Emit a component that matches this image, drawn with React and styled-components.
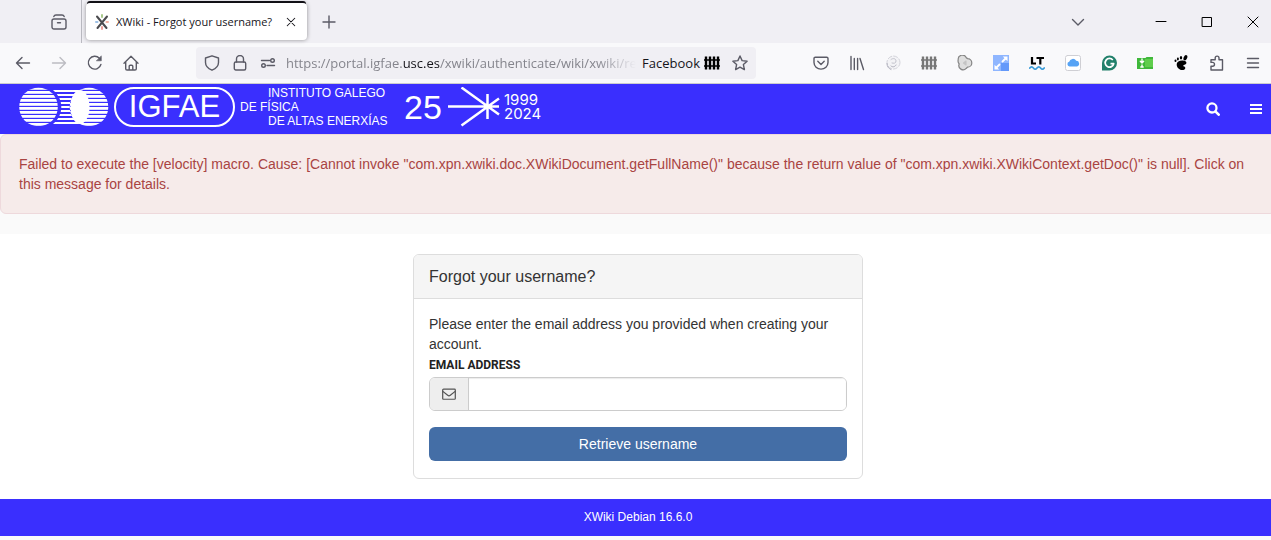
import React from 'react';
import styled, { createGlobalStyle } from 'styled-components';

// CONSTANTS
const COLORS = {
    brand: '#3a2ffe',
    tabBar: '#f0eff4',
    toolbar: '#f9f9fb',
    icon: '#5b5b66',
    pageBK: '#fafafa',
    border: '#dddddd',
    inputBorder: '#cccccc',
    text: '#333333',
    error: '#a94442',
    errorBK: '#f6ebea',
    errorBorder: '#eed9dc',
    button: '#446ea6',
};

const FONTS = {
    chrome: '"Open Sans", "Noto Sans", sans-serif',
    page: '"Liberation Sans", Arial, sans-serif',
    label: 'Roboto, "Liberation Sans", sans-serif',
};

const Icon = ({ children, size = 16, color = COLORS.icon, width = 1.4 }) => (
    <svg width={size} height={size} viewBox="0 0 16 16" fill="none" stroke={color}
        strokeWidth={width} strokeLinecap="round" strokeLinejoin="round" aria-hidden="true">
        {children}
    </svg>
)

const NAV_BUTTONS = [
    { label: 'Back', icon: <Icon><path d="M14.5 8H1.5M7 2.5 1.5 8 7 13.5" /></Icon> },
    { label: 'Forward', icon: <Icon color="#bcbcc2"><path d="M1.5 8h13M9 2.5 14.5 8 9 13.5" /></Icon> },
    {
        label: 'Reload',
        icon: <Icon><path d="M13.9 9.5A6.4 6.4 0 1 1 12.4 3.3" /><path d="M14.3 1.2v4.6H9.7z" fill={COLORS.icon} strokeWidth=".6" /></Icon>,
    },
    {
        label: 'Home',
        icon: <Icon><path d="M1 8.2 8 1.2l7 7M2.7 7v6.7a1.3 1.3 0 0 0 1.3 1.3h8a1.3 1.3 0 0 0 1.3-1.3V7M6.2 15v-3.7A1.1 1.1 0 0 1 7.3 10.2h1.4a1.1 1.1 0 0 1 1.1 1.1V15" /></Icon>,
    },
];

const Fence = ({ color }) => (
    <Icon color={color} width={2.4}>
        <path d="M2 1.5v13M6 1.5v13M10 1.5v13M14 1.5v13" strokeLinecap="butt" />
        <path d="M0 5h16M0 11h16" strokeWidth="1.4" strokeLinecap="butt" />
    </Icon>
)

const EXTENSIONS = [
    {
        label: 'Save to Pocket',
        icon: <Icon><path d="M2.3 2.2h11.4a1.3 1.3 0 0 1 1.3 1.3v4a7 6.6 0 0 1-14 0v-4a1.3 1.3 0 0 1 1.3-1.3zM4.8 6.3 8 9.4l3.2-3.1" /></Icon>,
    },
    { label: 'Library', icon: <Icon><path d="M2 1.5v13M5.3 3.5v11M8.6 3.5v11M11 3.5l3.5 11" /></Icon> },
    {
        label: 'Citations',
        icon: (
            <Icon color="#d3d3da" width={1}>
                <circle cx="8.5" cy="7.5" r="6.5" fill="#f3f3f6" strokeDasharray="4 2" />
                <path d="M6 4.500C8 2.800 11 3.500 11 6s-2.500 2.500-4 2" stroke="#c2c2cc" />
                <path d="M2 8.500c0 3 1.500 5 4 6M6 11c1.500 1.500 4 1 5-1" stroke="#aeaebb" />
            </Icon>
        ),
    },
    { label: 'Fence', icon: <Fence color="#777777" /> },
    {
        label: 'Containers',
        icon: (
            <Icon color="#858585" width={1.2}>
                <path d="M1.200 4.800a4.200 4.200 0 0 1 8-2.200 4.600 4.600 0 0 1 1.300 1 4.200 4.200 0 0 1 0 8.600 4.600 4.600 0 0 1-1.300 1.200 4.200 4.200 0 0 1-7-4.400 4.500 4.500 0 0 1-1-4.200z" fill="#dedede" />
                <path d="M6.500 8 9 6v4z" fill="#c4c4c4" stroke="#c4c4c4" />
            </Icon>
        ),
    },
    {
        label: 'Resize',
        icon: (
            <Icon color="#ffffff" width={1.8}>
                <path d="M0 0h16v16H0z" fill="#8fb6ff" stroke="none" />
                <path d="M8 8h8v8H8z" fill="#6499fa" stroke="none" />
                <path d="M9.500 6.500 13 3M6.500 9.500 3 13" />
                <path d="M9.800 1.500h4.700v4.700zM1.500 9.800v4.700h4.700z" fill="#ffffff" stroke="none" />
            </Icon>
        ),
    },
    {
        label: 'LanguageTool',
        icon: (
            <Icon color="#000000" width={2.2}>
                <path d="M3 2v6.500h4M7.500 3h7.500M11.300 3v6.500" strokeLinecap="butt" strokeLinejoin="miter" />
                <path d="M.8 13c1.200-1.600 2.400-1.600 3.600 0s2.400 1.600 3.600 0 2.400-1.600 3.600 0 2.400 1.600 3.600 0" stroke="#3a9bd8" strokeWidth="1.7" />
            </Icon>
        ),
    },
    {
        label: 'iCloud',
        icon: (
            <Icon width={1}>
                <rect x=".5" y=".5" width="15" height="15" rx="2" fill="#ffffff" stroke="#cfcfd4" />
                <path d="M4.500 11.500a2.400 2.400 0 0 1-.3-4.700 3.800 3.800 0 0 1 7-1A2.900 2.900 0 0 1 12 11.500z" fill="#56a3f5" stroke="none" />
            </Icon>
        ),
    },
    {
        label: 'Grammarly',
        icon: (
            <Icon color="#ffffff" width={1.7}>
                <path d="M8.500.5A7.500 7.500 0 1 1 8.500 15.500H1V8A7.500 7.500 0 0 1 8.500.5z" fill="#22806b" stroke="none" />
                <path d="M11.800 5A4.300 4.300 0 1 0 12.700 8.700H9.500" strokeLinecap="butt" />
            </Icon>
        ),
    },
    {
        label: 'Downloads',
        icon: (
            <Icon color="#ffffff" width={1.4}>
                <path d="M0 3h8.500l1-1H16v12H0z" fill="#3fb83a" stroke="none" />
                <path d="M8 4h8v8H8z" fill="#5fcd4c" stroke="none" />
                <path d="M5 4v4M3.300 6.300 5 8l1.700-1.700M5 10v2M3.800 12h2.400" />
            </Icon>
        ),
    },
    {
        label: 'GNOME Shell',
        icon: (
            <Icon color="none">
                <g fill="#000000">
                    <path d="M9 5.500c3 0 5 1.200 4.300 3-.6 1.600-2.800 1-3 2-.2 1.200 2.200.8 2 2.700-.3 1.800-3.300 2.300-5 1.500C4.500 13.500 3.500 11 3.700 9 4 6.800 6.200 5.500 9 5.500z" />
                    <ellipse cx="12.400" cy="2.800" rx="1.700" ry="2.800" transform="rotate(25 12.400 2.800)" />
                    <ellipse cx="8" cy="2.800" rx="1.200" ry="1.800" />
                    <ellipse cx="4.900" cy="4" rx="1" ry="1.400" />
                    <ellipse cx="2.500" cy="5.800" rx="1" ry="1.200" />
                </g>
            </Icon>
        ),
    },
    {
        label: 'Extensions',
        icon: <Icon><path d="M2 15v-3.800h1.600a1.900 1.900 0 0 0 0-3.800H2V4.700h4.200V3a1.900 1.900 0 0 1 3.800 0v1.700h3.500V15z" /></Icon>,
    },
    { label: 'Application menu', icon: <Icon><path d="M2.500 3.500h11M2.500 8h11M2.500 12.500h11" /></Icon> },
];

const WINDOW_BUTTONS = [
    { label: 'Minimize', path: 'M3 7.500h10' },
    { label: 'Maximize', path: 'M3.500 3.500h9v9h-9z' },
    { label: 'Close', path: 'M3 3l10 10M13 3 3 13' },
];

const XWikiFavicon = () => (
    <svg width="16" height="16" viewBox="0 0 16 16" fill="none" strokeLinecap="round" aria-hidden="true">
        <path d="M8 1v2" stroke="#a9c98b" strokeWidth="2" />
        <path d="M8 13v2" stroke="#f0a09a" strokeWidth="2" />
        <path d="M2 8h1.500" stroke="#9dc0e6" strokeWidth="2" />
        <path d="M12.500 8H14" stroke="#f3b0a0" strokeWidth="2" />
        <path d="M3 2.500 12.500 14M13 2.500 3.500 14" stroke="#4b4b4f" strokeWidth="2" />
    </svg>
)

const TabBar = () => (
    <TabBarWrapper>
        <FirefoxView aria-label="Firefox View">
            <Icon><rect x="1" y="5" width="14" height="10" rx="2" /><path d="M2.800 2.600C3.200 1.500 4 1 5 1h6c1 0 1.800.5 2.200 1.600M6.500 8.700h3" /></Icon>
        </FirefoxView>
        <Tab>
            <XWikiFavicon />
            <TabTitle>XWiki - Forgot your username?</TabTitle>
            <CloseTab aria-label="Close tab">
                <Icon size={12} color="#15141a"><path d="M3 3l10 10M13 3 3 13" /></Icon>
            </CloseTab>
        </Tab>
        <ChromeButton aria-label="New tab">
            <Icon><path d="M8 2v12M2 8h12" /></Icon>
        </ChromeButton>
        <Spacer />
        <ChromeButton aria-label="List all tabs">
            <Icon><path d="M2.500 5.500 8 11l5.500-5.500" /></Icon>
        </ChromeButton>
        <WindowButtons>
            {WINDOW_BUTTONS.map(({ label, path }) => (
                <WindowButton key={label} aria-label={label}>
                    <Icon color="#000000" width={1}><path d={path} /></Icon>
                </WindowButton>
            ))}
        </WindowButtons>
    </TabBarWrapper>
)

const Toolbar = () => (
    <ToolbarWrapper>
        {NAV_BUTTONS.map(({ label, icon }) => (
            <ChromeButton key={label} aria-label={label}>{icon}</ChromeButton>
        ))}
        <UrlBar>
            <UrlButton aria-label="Tracking protection">
                <Icon><path d="M8 .8 14.500 3v4.500c0 3.200-3 6.200-6.500 7.700-3.500-1.500-6.500-4.500-6.500-7.700V3z" /></Icon>
            </UrlButton>
            <UrlButton aria-label="Site information">
                <Icon><rect x="2.300" y="7" width="11.400" height="8" rx="1.500" /><path d="M4.500 7V4a3.500 3.500 0 0 1 7 0v3" /></Icon>
            </UrlButton>
            <UrlButton aria-label="Permissions">
                <Icon><path d="M1.500 5.500h8M7 10.500h7.500" /><circle cx="12.500" cy="5.500" r="1.800" /><circle cx="3.500" cy="10.500" r="1.800" /></Icon>
            </UrlButton>
            <Url role="textbox" tabIndex={0} aria-label="Address">
                https://portal.igfae.<strong>usc.es</strong>/xwiki/authenticate/wiki/xwiki/ret
            </Url>
            <ContainerName>Facebook <Fence color="#000000" /></ContainerName>
            <UrlButton aria-label="Bookmark this page">
                <Icon><path d="m8 1 2.100 4.600 5 .6-3.700 3.400 1 5L8 12.100l-4.400 2.500 1-5L.9 6.200l5-.6z" /></Icon>
            </UrlButton>
        </UrlBar>
        {EXTENSIONS.map(({ label, icon }) => (
            <ChromeButton key={label} aria-label={label}>{icon}</ChromeButton>
        ))}
    </ToolbarWrapper>
)

const CirclesLogo = () => (
    <svg width="90" height="40" viewBox="0 0 90 40" aria-hidden="true">
        <defs>
            <pattern id="wide" width="4" height="4" patternUnits="userSpaceOnUse">
                <rect width="4" height="2.8" fill="#ffffff" />
            </pattern>
            <pattern id="thin" y="3" width="4" height="4" patternUnits="userSpaceOnUse">
                <rect width="4" height="2" fill="#ffffff" />
            </pattern>
        </defs>
        <circle cx="19.500" cy="20" r="19.300" fill="url(#wide)" />
        <path d="M34 3h27v34H34A21.500 21.500 0 0 0 34 3z" fill="url(#thin)" />
        <circle cx="70" cy="20" r="19.300" fill={COLORS.brand} />
        <circle cx="70" cy="20" r="19.300" fill="url(#wide)" />
        <ellipse cx="61" cy="20" rx="9.500" ry="17" fill="#ffffff" />
    </svg>
)

const StarLogo = () => (
    <svg width="52" height="40" viewBox="0 0 52 40" fill="none" stroke="#ffffff" strokeWidth="2.5" aria-hidden="true">
        <path d="M0 19.500h51M13.500.5 51 27.500M13.500 38.500 51 11.500M39.500 7v25" />
    </svg>
)

const SiteHeader = () => (
    <SiteHeaderWrapper>
        <Brand href="#">
            <CirclesLogo />
            <Pill>IGFAE</Pill>
            <Institute>
                <InstituteLine $indent>INSTITUTO GALEGO</InstituteLine>
                <InstituteLine>DE FÍSICA</InstituteLine>
                <InstituteLine $indent>DE ALTAS ENERXÍAS</InstituteLine>
            </Institute>
            <Anniversary>25</Anniversary>
            <StarLogo />
            <Years>
                <span>1999</span>
                <span>2024</span>
            </Years>
        </Brand>
        <HeaderActions>
            <HeaderButton aria-label="Search">
                <Icon size={14} color="#ffffff" width={2.6}><circle cx="6.800" cy="6.800" r="5.200" /><path d="m11 11 3.500 3.500" strokeWidth="3" /></Icon>
            </HeaderButton>
            <HeaderButton aria-label="Menu">
                <svg width="12" height="10" viewBox="0 0 12 10" fill="#ffffff" aria-hidden="true">
                    <path d="M0 0h12v2H0zM0 4h12v2H0zM0 8h12v2H0z" />
                </svg>
            </HeaderButton>
        </HeaderActions>
    </SiteHeaderWrapper>
)

const ForgotUsernameForm = () => {
    const [email, setEmail] = React.useState('');

    return (
        <Card onSubmit={(ev) => ev.preventDefault()}>
            <CardTitle>Forgot your username?</CardTitle>
            <CardBody>
                <p>Please enter the email address you provided when creating your account.</p>
                <Label htmlFor="email">Email address</Label>
                <InputGroup>
                    <Addon>
                        <Icon size={14} color="#555555"><rect x=".8" y="2.500" width="14.400" height="11.500" rx="1" /><path d="m1 5 5.500 4.500c1 .8 2 .8 3 0L15 5" /></Icon>
                    </Addon>
                    <Input id="email" type="text" value={email} onChange={(ev) => setEmail(ev.target.value)} />
                </InputGroup>
                <SubmitButton type="submit">Retrieve username</SubmitButton>
            </CardBody>
        </Card>
    )
}

const App = () => (
    <>
        <GlobalStyle />
        <Window>
            <TabBar />
            <Toolbar />
            <SiteHeader />
            <ErrorMessage role="alert">
                Failed to execute the [velocity] macro. Cause: [Cannot invoke "com.xpn.xwiki.doc.XWikiDocument.getFullName()" because the return value of "com.xpn.xwiki.XWikiContext.getDoc()" is null]. Click on this message for details.
            </ErrorMessage>
            <Main>
                <ForgotUsernameForm />
            </Main>
            <Footer>XWiki Debian 16.6.0</Footer>
        </Window>
    </>
)

const GlobalStyle = createGlobalStyle`
    *, *::before, *::after {
        box-sizing: border-box;
    }

    body {
        margin: 0;
        overflow-x: hidden;
        background-color: ${COLORS.pageBK};
        color: ${COLORS.text};
        font-family: ${FONTS.page};
        font-size: 14px;
        line-height: 20px;
    }

    p {
        margin: 0;
    }

    svg {
        display: block;
        flex-shrink: 0;
    }

    button {
        padding: 0;
        border: none;
        background: none;
        font: inherit;
    }
`

/* The right edge of the window runs slightly past the viewport */
const Window = styled.div`
    width: calc(100% + 5px);
`

const TabBarWrapper = styled.div`
    display: flex;
    align-items: center;
    height: 43px;
    background-color: ${COLORS.tabBar};
`

const FirefoxView = styled.button`
    align-self: stretch;
    display: flex;
    align-items: center;
    justify-content: flex-end;
    width: 82px;
    padding-right: 14px;
    border-right: 1px solid #b9b9c0;
`

const Tab = styled.div`
    display: flex;
    align-items: center;
    gap: 6px;
    width: 221px;
    height: 37px;
    margin: 0 4px;
    padding: 0 8px;
    border-radius: 4px;
    background-color: white;
    box-shadow: 0 0 4px rgba(0, 0, 0, .4), 0 -3px 0 -1px #15141a;
`

const TabTitle = styled.span`
    flex: 1;
    overflow: hidden;
    color: #15141a;
    font-family: ${FONTS.chrome};
    font-size: 11px;
    white-space: nowrap;
`

const CloseTab = styled.button`
    display: flex;
    align-items: center;
    justify-content: center;
    width: 16px;
    height: 20px;
`

const ChromeButton = styled.button`
    display: flex;
    align-items: center;
    justify-content: center;
    flex-shrink: 0;
    width: 36px;
    height: 32px;
`

const Spacer = styled.div`
    flex: 1;
`

const WindowButtons = styled.div`
    display: flex;
    margin-left: 42px;
`

const WindowButton = styled.button`
    display: flex;
    align-items: center;
    justify-content: center;
    width: 46px;
    height: 32px;
`

const ToolbarWrapper = styled.div`
    display: flex;
    align-items: center;
    height: 41px;
    padding: 0 5px;
    border-bottom: 1px solid #cccccf;
    background-color: ${COLORS.toolbar};
`

const UrlBar = styled.div`
    flex: 1;
    min-width: 0;
    display: flex;
    align-items: center;
    height: 32px;
    margin: 0 47px;
    padding: 0 2px;
    border-radius: 4px;
    background-color: ${COLORS.tabBar};
    font-family: ${FONTS.chrome};
    font-size: 13px;
`

const UrlButton = styled.button`
    display: flex;
    align-items: center;
    justify-content: center;
    flex-shrink: 0;
    width: 28px;
    height: 28px;
`

const Url = styled.div`
    flex: 1;
    min-width: 0;
    margin-left: 4px;
    overflow: hidden;
    color: #85858d;
    white-space: nowrap;
    mask-image: linear-gradient(to left, transparent, black 40px);

    strong {
        color: #15141a;
        font-weight: 400;
    }
`

const ContainerName = styled.div`
    display: flex;
    align-items: center;
    gap: 4px;
    margin: 0 6px;
    color: #15141a;
`

const SiteHeaderWrapper = styled.header`
    display: flex;
    align-items: center;
    justify-content: space-between;
    height: 50px;
    padding: 0 7px 0 19px;
    background-color: ${COLORS.brand};
`

const Brand = styled.a`
    align-self: flex-start;
    display: flex;
    align-items: center;
    height: 46px;
    color: white;
    text-decoration: none;
`

const Pill = styled.span`
    display: flex;
    align-items: center;
    justify-content: center;
    width: 121px;
    height: 40px;
    margin: 0 5px;
    border: 2px solid white;
    border-radius: 20px;
    font-size: 31px;
    line-height: 36px;
`

const Institute = styled.span`
    display: flex;
    flex-direction: column;
    width: 164px;
    font-size: 12px;
    line-height: 14px;
`

const InstituteLine = styled.span`
    padding-left: ${(props) => (props.$indent ? 28 : 0)}px;
    white-space: nowrap;
`

const Anniversary = styled.span`
    width: 44px;
    font-size: 34px;
    line-height: 40px;
`

const Years = styled.span`
    display: flex;
    flex-direction: column;
    margin-left: 4px;
    font-family: Inter, sans-serif;
    font-size: 15px;
    line-height: 14px;
`

const HeaderActions = styled.div`
    display: flex;
    gap: 16px;
`

const HeaderButton = styled.button`
    display: flex;
    align-items: center;
    justify-content: center;
    width: 27px;
    height: 32px;
`

const ErrorMessage = styled.div`
    margin-bottom: 20px;
    padding: 19px 18px;
    border: 1px solid ${COLORS.errorBorder};
    border-radius: 6px;
    background-color: ${COLORS.errorBK};
    color: ${COLORS.error};
`

const Main = styled.main`
    display: flex;
    justify-content: center;
    padding: 20px;
    background-color: white;
`

const Card = styled.form`
    width: 100%;
    max-width: 450px;
    border: 1px solid ${COLORS.border};
    border-radius: 6px;
    overflow: hidden;
`

const CardTitle = styled.h1`
    margin: 0;
    padding: 10px 15px;
    border-bottom: 1px solid ${COLORS.border};
    background-color: #f5f5f5;
    font-size: 16px;
    font-weight: 400;
    line-height: 23px;
`

const CardBody = styled.div`
    display: flex;
    flex-direction: column;
    padding: 15px 15px 17px;
`

const Label = styled.label`
    color: #222222;
    font-family: ${FONTS.label};
    font-size: 12px;
    font-weight: 700;
    line-height: 22px;
    text-transform: uppercase;
`

const InputGroup = styled.div`
    display: flex;
    height: 34px;
    margin: 1px 0 16px;
    border: 1px solid ${COLORS.inputBorder};
    border-radius: 6px;
    overflow: hidden;
`

const Addon = styled.span`
    display: flex;
    align-items: center;
    justify-content: center;
    width: 39px;
    border-right: 1px solid ${COLORS.inputBorder};
    background-color: #eeeeee;
`

const Input = styled.input`
    flex: 1;
    min-width: 0;
    padding: 6px 12px;
    border: none;
    outline: none;
    background-color: white;
    box-shadow: inset 0 1px 1px rgba(0, 0, 0, .08);
    color: #555555;
    font: inherit;
`

const SubmitButton = styled.button`
    height: 34px;
    border-radius: 6px;
    background-color: ${COLORS.button};
    color: white;
`

const Footer = styled.footer`
    padding: 8px 0 9px;
    background-color: ${COLORS.brand};
    color: white;
    font-size: 12px;
    text-align: center;
`

export default App;
